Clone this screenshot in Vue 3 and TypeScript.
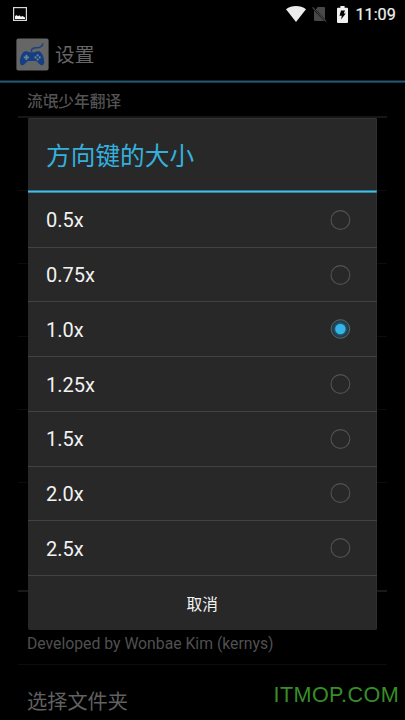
<script setup lang="ts">
import { ref } from 'vue'

const sizes: string[] = ['0.5x', '0.75x', '1.0x', '1.25x', '1.5x', '2.0x', '2.5x']
const selected = ref<string>('1.0x')
const hiddenRows = 5
</script>

<template>
  <main class="screen">
    <header class="status">
      <svg class="picture" width="14" height="14" viewBox="0 0 14 14">
        <rect x=".6" y=".6" width="12.8" height="12.8" fill="none" stroke="#d8d8d8" stroke-width="1.2" />
        <path d="M2 12V9.300L3.300 8 5 9.300 6.200 8.300 8 9.800 9.500 8.900 12 10.500V12Z" fill="#f4f4f4" />
      </svg>
      <div class="indicators">
        <svg class="wifi" width="20" height="16" viewBox="0 0 20 16">
          <path d="M0 3.300C5.700-1.100 14.300-1.100 20 3.300L10 15.900Z" fill="#ececec" />
        </svg>
        <svg class="nosim" width="15" height="16" viewBox="0 0 15 16">
          <path d="M5.600 1H12q1 0 1 1v11.200L3.800 3.600ZM2 4.400 12.300 15H3q-1 0-1-1Z" fill="#484848" />
          <path d="M.5 1.400 14 15.300" stroke="#484848" stroke-width="1.200" />
        </svg>
        <svg class="battery" width="11" height="17" viewBox="0 0 11 17">
          <path d="M3.400 0h4.200v1.800H10q1 0 1 1V16q0 1-1 1H1q-1 0-1-1V2.800q0-1 1-1h2.400Z" fill="#f0f0f0" />
          <path d="M4 4.500H8L6.800 7.600H8.800L4 13.600 4.800 9.700H2.500Z" fill="#000" />
        </svg>
        <span class="clock">11:09</span>
      </div>
    </header>

    <div class="actionbar">
      <svg width="33" height="33" viewBox="0 0 33 33">
        <rect x=".4" y=".4" width="32.200" height="32.200" rx="2" fill="#666" />
        <path d="M15.400 13.600C15 10.900 17 9.800 20.300 9.800 24 9.800 26.300 8.500 27 5.300" fill="none" stroke="#17427f" stroke-width="1.500" />
        <path d="M9.300 13.300C11.500 12.900 12.700 14.300 14 14.300H18C19.300 14.300 20.600 12.900 22.800 13.300C26.400 14 28.400 20.500 28.200 24.200C28 27.700 25.400 28.100 23.400 26L20.300 22.900H11.800L8.700 26C6.700 28.100 4.100 27.700 3.900 24.200C3.700 20.500 5.700 14 9.300 13.300Z" fill="#153f84" />
        <path d="M10.400 16.800v5.200M7.800 19.400h5.200" stroke="#77828d" stroke-width="1.700" />
        <g fill="#77828d"><circle cx="21.600" cy="17.300" r="1.100" /><circle cx="21.600" cy="21.500" r="1.100" /><circle cx="19.500" cy="19.400" r="1.100" /><circle cx="23.700" cy="19.400" r="1.100" /></g>
      </svg>
      <h1>设置</h1>
    </div>

    <section class="settings">
      <h2>流氓少年翻译</h2>
      <div v-for="n in hiddenRows" :key="n" class="setting"></div>
      <div class="section-gap"></div>
      <div class="setting about">Developed by Wonbae Kim (kernys)</div>
      <div class="setting folder">选择文件夹</div>
    </section>

    <div class="overlay">
      <div class="dialog" role="dialog">
        <h3>方向键的大小</h3>
        <ul>
          <li v-for="size in sizes" :key="size" @click="selected = size">
            <span>{{ size }}</span>
            <svg width="22" height="22" viewBox="0 0 22 22">
              <template v-if="selected === size">
                <circle cx="11.400" cy="11" r="9.300" fill="#243c46" stroke="#56676e" stroke-width="1" />
                <circle cx="11.400" cy="11" r="6.700" fill="#1d566c" />
                <circle cx="11.400" cy="11" r="5.200" fill="#35b5e5" />
              </template>
              <circle v-else cx="11.400" cy="11" r="9.400" fill="none" stroke="#525252" stroke-width="1.100" />
            </svg>
          </li>
        </ul>
        <button type="button">取消</button>
      </div>
    </div>
    <div class="watermark">ITMOP.COM</div>
  </main>
</template>

<style>
body { background: #000; overflow: hidden; }
</style>

<style scoped>
* { box-sizing: border-box; }
h1, h2, h3, ul { margin: 0; padding: 0; font-weight: 400; }
.screen {
  position: relative;
  width: 405px;
  height: 720px;
  overflow: hidden;
  background: #000;
  font-family: Roboto, "Noto Sans CJK SC", sans-serif;
}
.status {
  height: 28px;
  display: flex;
  justify-content: space-between;
  align-items: center;
  padding: 0 8.500px 0 13px;
}
.indicators { display: flex; align-items: center; }
.wifi { margin-right: 6px; }
.nosim { margin-right: 10px; }
.battery { margin-right: 8px; }
.clock { width: 41px; color: #f0f0f0; font-size: 16.200px; line-height: 28px; white-space: nowrap; padding-top: 1px; -webkit-text-stroke: .2px #f0f0f0; }
.actionbar {
  height: 55px;
  display: flex;
  align-items: center;
  gap: 6px;
  padding: 1px 16px 3px;
  background: linear-gradient(#102632 0 1px, #205870 1px 2px, #173b4b 2px 3px) bottom / 100% 3px no-repeat;
}
h1 { color: #666; font-size: 19.700px; line-height: 30px; padding-top: 3px; }
.settings { padding: 0 18px; }
h2 {
  height: 35px;
  padding: 0 9px;
  border-bottom: 2px solid #161616;
  color: #535353;
  font-size: 15.700px;
  font-weight: 500;
  line-height: 37px;
}
.setting { height: 73px; border-bottom: 1px solid #0c0c0c; padding: 0 9px; }
.section-gap { height: 109px; border-bottom: 2px solid #191919; }
.about { color: #505050; font-size: 15.750px; line-height: 20px; padding-top: 42px; white-space: nowrap; }
.folder { color: #616161; font-size: 20.200px; line-height: 30px; padding-top: 22px; }
.overlay {
  position: absolute;
  inset: 0;
  padding: 118px 28.500px 0 28px;
}
.dialog {
  height: 511.500px;
  display: flex;
  flex-direction: column;
  border-radius: 2px;
  background: #282828;
  box-shadow: inset 0 1px 0 #333, inset -1px 0 0 #2f2f2f;
  overflow: hidden;
}
h3 {
  flex: none;
  height: 75px;
  padding: 0 18px;
  background: linear-gradient(#267a96 0 1px, #4cbce2 1px 2px, #2f86a4 2px 3px) bottom / 100% 3px no-repeat;
  color: #35b0dd;
  font-size: 24.700px;
  line-height: 77px;
}
ul { list-style: none; }
li {
  height: 54.720px;
  display: flex;
  justify-content: space-between;
  align-items: center;
  padding: 0 25.500px 0 18px;
  border-bottom: 1px solid #424242;
  color: #f2f2f2;
  font-size: 20px;
}
li span { padding-top: 1px; }
li svg { flex: none; }
button {
  flex: 1;
  border: 0;
  padding: 1px 0 0;
  background: transparent;
  color: #f4f4f4;
  font: 15.700px Roboto, "Noto Sans CJK SC", sans-serif;
}
.watermark {
  position: absolute;
  left: 273.500px;
  top: 682px;
  color: #378e28;
  font: 21.600px/26px "Liberation Sans", sans-serif;
  letter-spacing: .4px;
  white-space: nowrap;
}
</style>
